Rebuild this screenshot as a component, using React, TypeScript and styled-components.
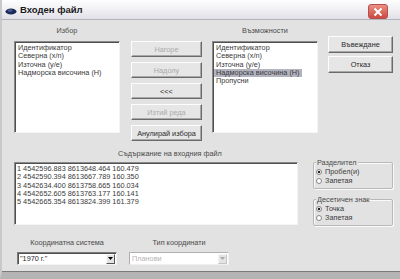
import styled, { createGlobalStyle } from 'styled-components'

const GlobalStyle = createGlobalStyle`
  html, body {
    margin: 0;
    padding: 0;
    background: #e2e2e2;
  }
  body {
    font-family: 'Liberation Sans', Arial, sans-serif;
  }
`

const fields = ['Идентификатор', 'Северна (x/n)', 'Източна (y/e)', 'Надморска височина (H)']
const options = [...fields, 'Пропусни']
const rows = [
  '1 4542596.883 8613648.464 160.479',
  '2 4542590.394 8613667.789 160.350',
  '3 4542634.400 8613758.665 160.034',
  '4 4542652.605 8613763.177 160.141',
  '5 4542665.354 8613824.399 161.379',
]

const InputFileDialog = () => (
  <Window>
    <TitleBar>
      <TitleIcon width="12" height="8" viewBox="0 0 12 8">
        <ellipse cx="6" cy="4.5" rx="5.5" ry="3" fill="#1c2a56" />
        <ellipse cx="5" cy="3.5" rx="2.5" ry="1.2" fill="#4b5d94" />
      </TitleIcon>
      <Title>Входен файл</Title>
      <CloseButton>
        <svg width="10" height="10" viewBox="0 0 10 10">
          <path d="M1.5 1.5 L8.5 8.5 M8.5 1.5 L1.5 8.5" stroke="#fff" strokeWidth="2" />
        </svg>
      </CloseButton>
    </TitleBar>
    <Body>
      <TopRow>
        <ListColumn>
          <Caption>Избор</Caption>
          <ListBox>
            {fields.map((f) => (
              <ListItem key={f}>{f}</ListItem>
            ))}
          </ListBox>
        </ListColumn>
        <ButtonColumn>
          <Button disabled>Нагоре</Button>
          <Button disabled>Надолу</Button>
          <Button>&lt;&lt;&lt;</Button>
          <Button disabled>Изтий реда</Button>
          <Button>Анулирай избора</Button>
        </ButtonColumn>
        <ListColumn>
          <Caption>Възможности</Caption>
          <ListBox>
            {options.map((o, i) => (
              <ListItem key={o} $selected={i === 3}>
                {o}
              </ListItem>
            ))}
          </ListBox>
        </ListColumn>
        <ActionColumn>
          <ActionButton>Въвеждане</ActionButton>
          <ActionButton>Отказ</ActionButton>
        </ActionColumn>
      </TopRow>

      <MiddleRow>
        <ContentColumn>
          <ContentCaption>Съдържание на входния файл</ContentCaption>
          <ContentBox>
            {rows.map((r) => (
              <ContentLine key={r}>{r}</ContentLine>
            ))}
          </ContentBox>
        </ContentColumn>
        <GroupColumn>
          <GroupBox>
            <GroupLegend>Разделител</GroupLegend>
            <Radio $checked>Пробел(и)</Radio>
            <Radio>Запетая</Radio>
          </GroupBox>
          <GroupBox>
            <GroupLegend>Десетичен знак</GroupLegend>
            <Radio $checked>Точка</Radio>
            <Radio>Запетая</Radio>
          </GroupBox>
        </GroupColumn>
      </MiddleRow>

      <BottomRow>
        <ComboField>
          <ComboCaption>Координатна система</ComboCaption>
          <Combo>
            <ComboText>"1970 г."</ComboText>
            <ComboArrow>
              <svg width="5" height="3" viewBox="0 0 5 3">
                <path d="M0 0 H5 L2.5 3 Z" fill="#000" />
              </svg>
            </ComboArrow>
          </Combo>
        </ComboField>
        <ComboField>
          <ComboCaption>Тип координати</ComboCaption>
          <Combo $disabled>
            <ComboText $disabled>Планови</ComboText>
            <ComboArrow $disabled>
              <svg width="5" height="3" viewBox="0 0 5 3">
                <path d="M0 0 H5 L2.5 3 Z" fill="#a8a8a8" />
              </svg>
            </ComboArrow>
          </Combo>
        </ComboField>
      </BottomRow>
    </Body>
  </Window>
)

export default function App() {
  return (
    <>
      <GlobalStyle />
      <InputFileDialog />
    </>
  )
}

const Window = styled.div`
  width: 400px;
  height: 279px;
  box-sizing: border-box;
  display: flex;
  flex-direction: column;
  background: #e2e2e2;
  border-left: 2px solid #c9c9c9;
  border-bottom: 7px solid #b4b4b4;
  box-shadow: inset 0 -1px 0 #7a7a7a;
  color: #3a3a3a;
  font-size: 7.3px;
  overflow: hidden;
`

const TitleBar = styled.div`
  height: 20px;
  flex-shrink: 0;
  display: flex;
  align-items: center;
  padding: 0 0 0 3px;
  background: linear-gradient(to bottom, #fdfdfe 0%, #f1f1f5 50%, #e0e0e7 100%);
  border-bottom: 1px solid #b4b4bc;
  box-sizing: border-box;
`

const TitleIcon = styled.svg`
  margin-top: 2px;
`

const Title = styled.div`
  margin-left: 3px;
  font-weight: bold;
  font-size: 9.5px;
  color: #1a1a1a;
  flex: 1;
`

const CloseButton = styled.div`
  width: 20px;
  height: 15px;
  margin: 4px 12px 0 0;
  display: flex;
  align-items: center;
  justify-content: center;
  border-radius: 3px;
  background: linear-gradient(to bottom, #eb8f82, #cc4a3e);
  border: 1px solid #b45050;
  box-sizing: border-box;
`

const Body = styled.div`
  flex: 1;
  display: flex;
  flex-direction: column;
  padding-left: 12px;
`

const TopRow = styled.div`
  display: flex;
  align-items: flex-start;
`

const ListColumn = styled.div`
  width: 106px;
  display: flex;
  flex-direction: column;
`

const Caption = styled.div`
  height: 21px;
  line-height: 21px;
  text-align: center;
  color: #4a4a4a;
`

const ListBox = styled.div`
  height: 92px;
  box-sizing: border-box;
  background: #fff;
  border: 1px solid;
  border-color: #8a8a8a #f4f4f4 #f4f4f4 #8a8a8a;
  box-shadow: inset 1px 1px 0 #505050;
  padding: 2px 0 0 3px;
`

const ListItem = styled.div<{ $selected?: boolean }>`
  display: table;
  line-height: 8.25px;
  white-space: nowrap;
  margin-left: ${({ $selected }) => ($selected ? '-2px' : '0')};
  padding: 0 ${({ $selected }) => ($selected ? '2px' : '0')};
  background: ${({ $selected }) => ($selected ? '#b4b4c0' : 'transparent')};
`

const ButtonColumn = styled.div`
  width: 71px;
  margin: 21px 10px 0 11px;
  display: flex;
  flex-direction: column;
  gap: 5px;
`

const Button = styled.div<{ disabled?: boolean }>`
  height: 16px;
  box-sizing: border-box;
  display: flex;
  align-items: center;
  justify-content: center;
  background: #e6e6e6;
  border: 1px solid;
  border-color: #fdfdfd #6a6a6a #6a6a6a #fdfdfd;
  box-shadow: inset -1px -1px 0 #a8a8a8;
  color: ${({ disabled }) => (disabled ? '#ababab' : '#2a2a2a')};
  white-space: nowrap;
`

const ActionColumn = styled.div`
  width: 65px;
  margin: 16px 0 0 10px;
  display: flex;
  flex-direction: column;
  gap: 3px;
`

const ActionButton = styled(Button)`
  height: 17px;
`

const MiddleRow = styled.div`
  display: flex;
  align-items: flex-start;
`

const ContentColumn = styled.div`
  width: 284px;
  display: flex;
  flex-direction: column;
`

const ContentCaption = styled.div`
  margin-top: 8px;
  height: 13px;
  line-height: 10px;
  padding-left: 104px;
  color: #4a4a4a;
  white-space: nowrap;
`

const ContentBox = styled.div`
  height: 63px;
  box-sizing: border-box;
  background: #fff;
  border: 1px solid;
  border-color: #8a8a8a #f4f4f4 #f4f4f4 #8a8a8a;
  box-shadow: inset 1px 1px 0 #505050;
  padding: 2px 0 0 2px;
`

const ContentLine = styled.div`
  line-height: 8.25px;
  white-space: nowrap;
`

const GroupColumn = styled.div`
  width: 80px;
  margin: 21px 0 0 15px;
  display: flex;
  flex-direction: column;
  gap: 10px;
`

const GroupBox = styled.div`
  position: relative;
  height: 27px;
  box-sizing: border-box;
  border: 1px solid #b8b8b8;
  box-shadow: 1px 1px 0 #fafafa, inset 1px 1px 0 #fafafa;
  border-radius: 2px;
  padding: 4px 0 0 2px;
`

const GroupLegend = styled.div`
  position: absolute;
  top: -4px;
  left: 2px;
  padding: 0 1px;
  line-height: 8px;
  background: #e2e2e2;
  color: #4a4a4a;
`

const Radio = styled.div<{ $checked?: boolean }>`
  display: flex;
  align-items: center;
  gap: 3px;
  height: 9px;

  &::before {
    content: '';
    width: 6px;
    height: 6px;
    box-sizing: border-box;
    border-radius: 50%;
    border: 1px solid #888;
    background: ${({ $checked }) =>
      $checked ? 'radial-gradient(circle, #222 0 1.4px, #fff 1.6px)' : '#fff'};
  }
`

const BottomRow = styled.div`
  display: flex;
  gap: 12px;
  margin-top: 10px;
  padding-left: 3px;
`

const ComboField = styled.div`
  width: 100px;
  display: flex;
  flex-direction: column;
`

const ComboCaption = styled.div`
  height: 16px;
  line-height: 13px;
  text-align: center;
  color: #4a4a4a;
  white-space: nowrap;
`

const Combo = styled.div<{ $disabled?: boolean }>`
  height: 13px;
  box-sizing: border-box;
  display: flex;
  align-items: center;
  background: #fff;
  border: 1px solid;
  border-color: ${({ $disabled }) =>
    $disabled ? '#b0b0b0 #f0f0f0 #f0f0f0 #b0b0b0' : '#7a7a7a #f4f4f4 #f4f4f4 #7a7a7a'};
  box-shadow: ${({ $disabled }) => ($disabled ? 'none' : 'inset 1px 1px 0 #505050')};
  padding-left: 2px;
`

const ComboText = styled.div<{ $disabled?: boolean }>`
  flex: 1;
  color: ${({ $disabled }) => ($disabled ? '#b4b4b4' : '#2a2a2a')};
`

const ComboArrow = styled.div<{ $disabled?: boolean }>`
  width: 9px;
  height: 10px;
  margin-right: 1px;
  box-sizing: border-box;
  display: flex;
  align-items: center;
  justify-content: center;
  background: #e4e4e4;
  border: 1px solid;
  border-color: ${({ $disabled }) => ($disabled ? '#f4f4f4 #c4c4c4 #c4c4c4 #f4f4f4' : '#fdfdfd #555 #555 #fdfdfd')};
`
